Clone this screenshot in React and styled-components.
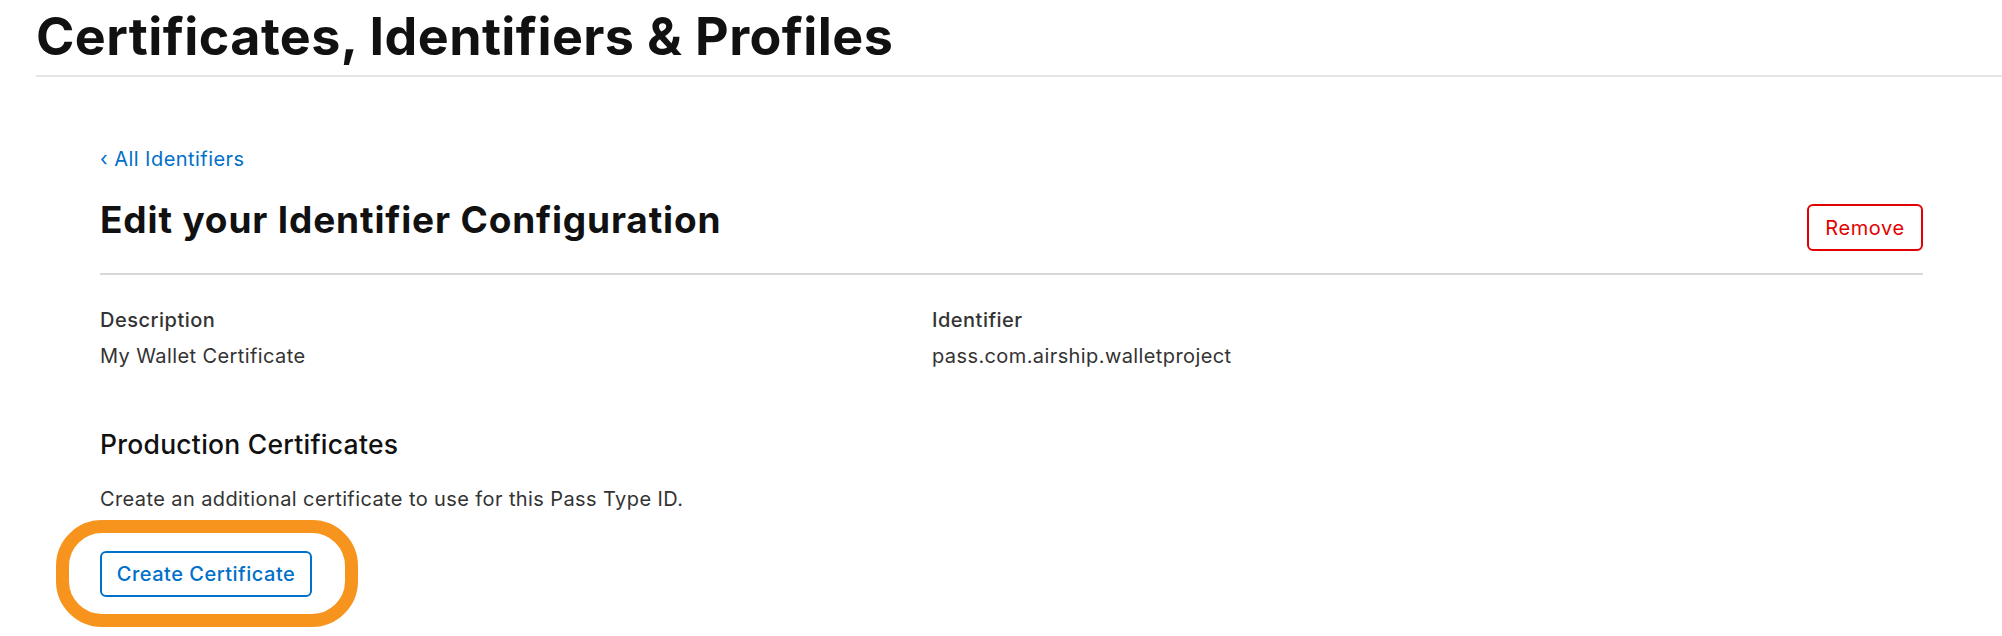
import styled, { createGlobalStyle } from "styled-components";

export default function App() {
  return (
    <>
      <GlobalStyle />
      <Header>
        <PageTitle>Certificates, Identifiers &amp; Profiles</PageTitle>
      </Header>

      <Main>
        <BackLink href="#">‹ All Identifiers</BackLink>

        <TitleRow>
          <H2>Edit your Identifier Configuration</H2>
          <Button $tone="danger">Remove</Button>
        </TitleRow>

        <Fields>
          <Field>
            <Label>Description</Label>
            <Value>My Wallet Certificate</Value>
          </Field>
          <Field>
            <Label>Identifier</Label>
            <Value>pass.com.airship.walletproject</Value>
          </Field>
        </Fields>

        <H3>Production Certificates</H3>
        <Text>Create an additional certificate to use for this Pass Type ID.</Text>

        <Highlight>
          <Button $tone="primary">Create Certificate</Button>
          <Ring />
        </Highlight>
      </Main>
    </>
  );
}

const GlobalStyle = createGlobalStyle`
  body {
    margin: 0;
    min-height: 636px;
    background: #fff;
    font-family: Inter, "Noto Sans", sans-serif;
    color: #333;
  }
`;

const Header = styled.header`
  margin-left: 36px;
  padding: 7px 0 8px;
  border-bottom: 2px solid #e5e5e5;
`;

const PageTitle = styled.h1`
  margin: 0;
  font-size: 52px;
  line-height: 60px;
  letter-spacing: 0.4px;
  font-weight: 700;
  color: #111;
`;

const Main = styled.main`
  padding: 70px 79px 40px 100px;
`;

const BackLink = styled.a`
  display: block;
  font-size: 20px;
  line-height: 24px;
  letter-spacing: 0.45px;
  color: #0070c9;
  text-decoration: none;
`;

const TitleRow = styled.div`
  display: flex;
  justify-content: space-between;
  align-items: flex-start;
  margin-top: 27px;
  padding-bottom: 22px;
  border-bottom: 2px solid #d8d8d8;
`;

const H2 = styled.h2`
  margin: 0;
  font-size: 37px;
  line-height: 44px;
  letter-spacing: 0.85px;
  font-weight: 700;
  color: #111;
`;

const Button = styled.button`
  display: flex;
  align-items: center;
  justify-content: center;
  margin-top: ${(p) => (p.$tone === "danger" ? "6px" : "0")};
  width: ${(p) => (p.$tone === "danger" ? "116px" : "212px")};
  height: ${(p) => (p.$tone === "danger" ? "47px" : "46px")};
  padding: 0;
  border: 2px solid ${(p) => (p.$tone === "danger" ? "#e30000" : "#0070c9")};
  border-radius: 6px;
  background: #fff;
  color: ${(p) => (p.$tone === "danger" ? "#e30000" : "#0070c9")};
  font-family: inherit;
  font-size: 20px;
  letter-spacing: ${(p) => (p.$tone === "danger" ? "0.6px" : "0.5px")};
  font-weight: ${(p) => (p.$tone === "danger" ? 400 : 500)};
  line-height: 1;
  cursor: pointer;
`;

const Fields = styled.div`
  display: grid;
  grid-template-columns: 832px 1fr;
  margin-top: 33px;
`;

const Field = styled.div`
  display: flex;
  flex-direction: column;
  gap: 12px;
`;

const Label = styled.div`
  font-size: 20px;
  line-height: 24px;
  letter-spacing: 0.5px;
  font-weight: 500;
  color: #333;
`;

const Value = styled.div`
  font-size: 20px;
  line-height: 24px;
  letter-spacing: 0.4px;
  color: #333;
`;

const H3 = styled.h3`
  margin: 60px 0 0;
  font-size: 26.5px;
  line-height: 32px;
  letter-spacing: 0.25px;
  font-weight: 500;
  color: #111;
`;

const Text = styled.p`
  margin: 27px 0 0;
  font-size: 20px;
  line-height: 24px;
  letter-spacing: 0.4px;
  color: #333;
`;

const Highlight = styled.div`
  position: relative;
  display: inline-block;
  margin-top: 40px;
`;

const Ring = styled.span`
  position: absolute;
  left: -44px;
  right: -46px;
  top: -31px;
  bottom: -30px;
  border: 13px solid #f7941e;
  border-radius: 46px;
  pointer-events: none;
`;
